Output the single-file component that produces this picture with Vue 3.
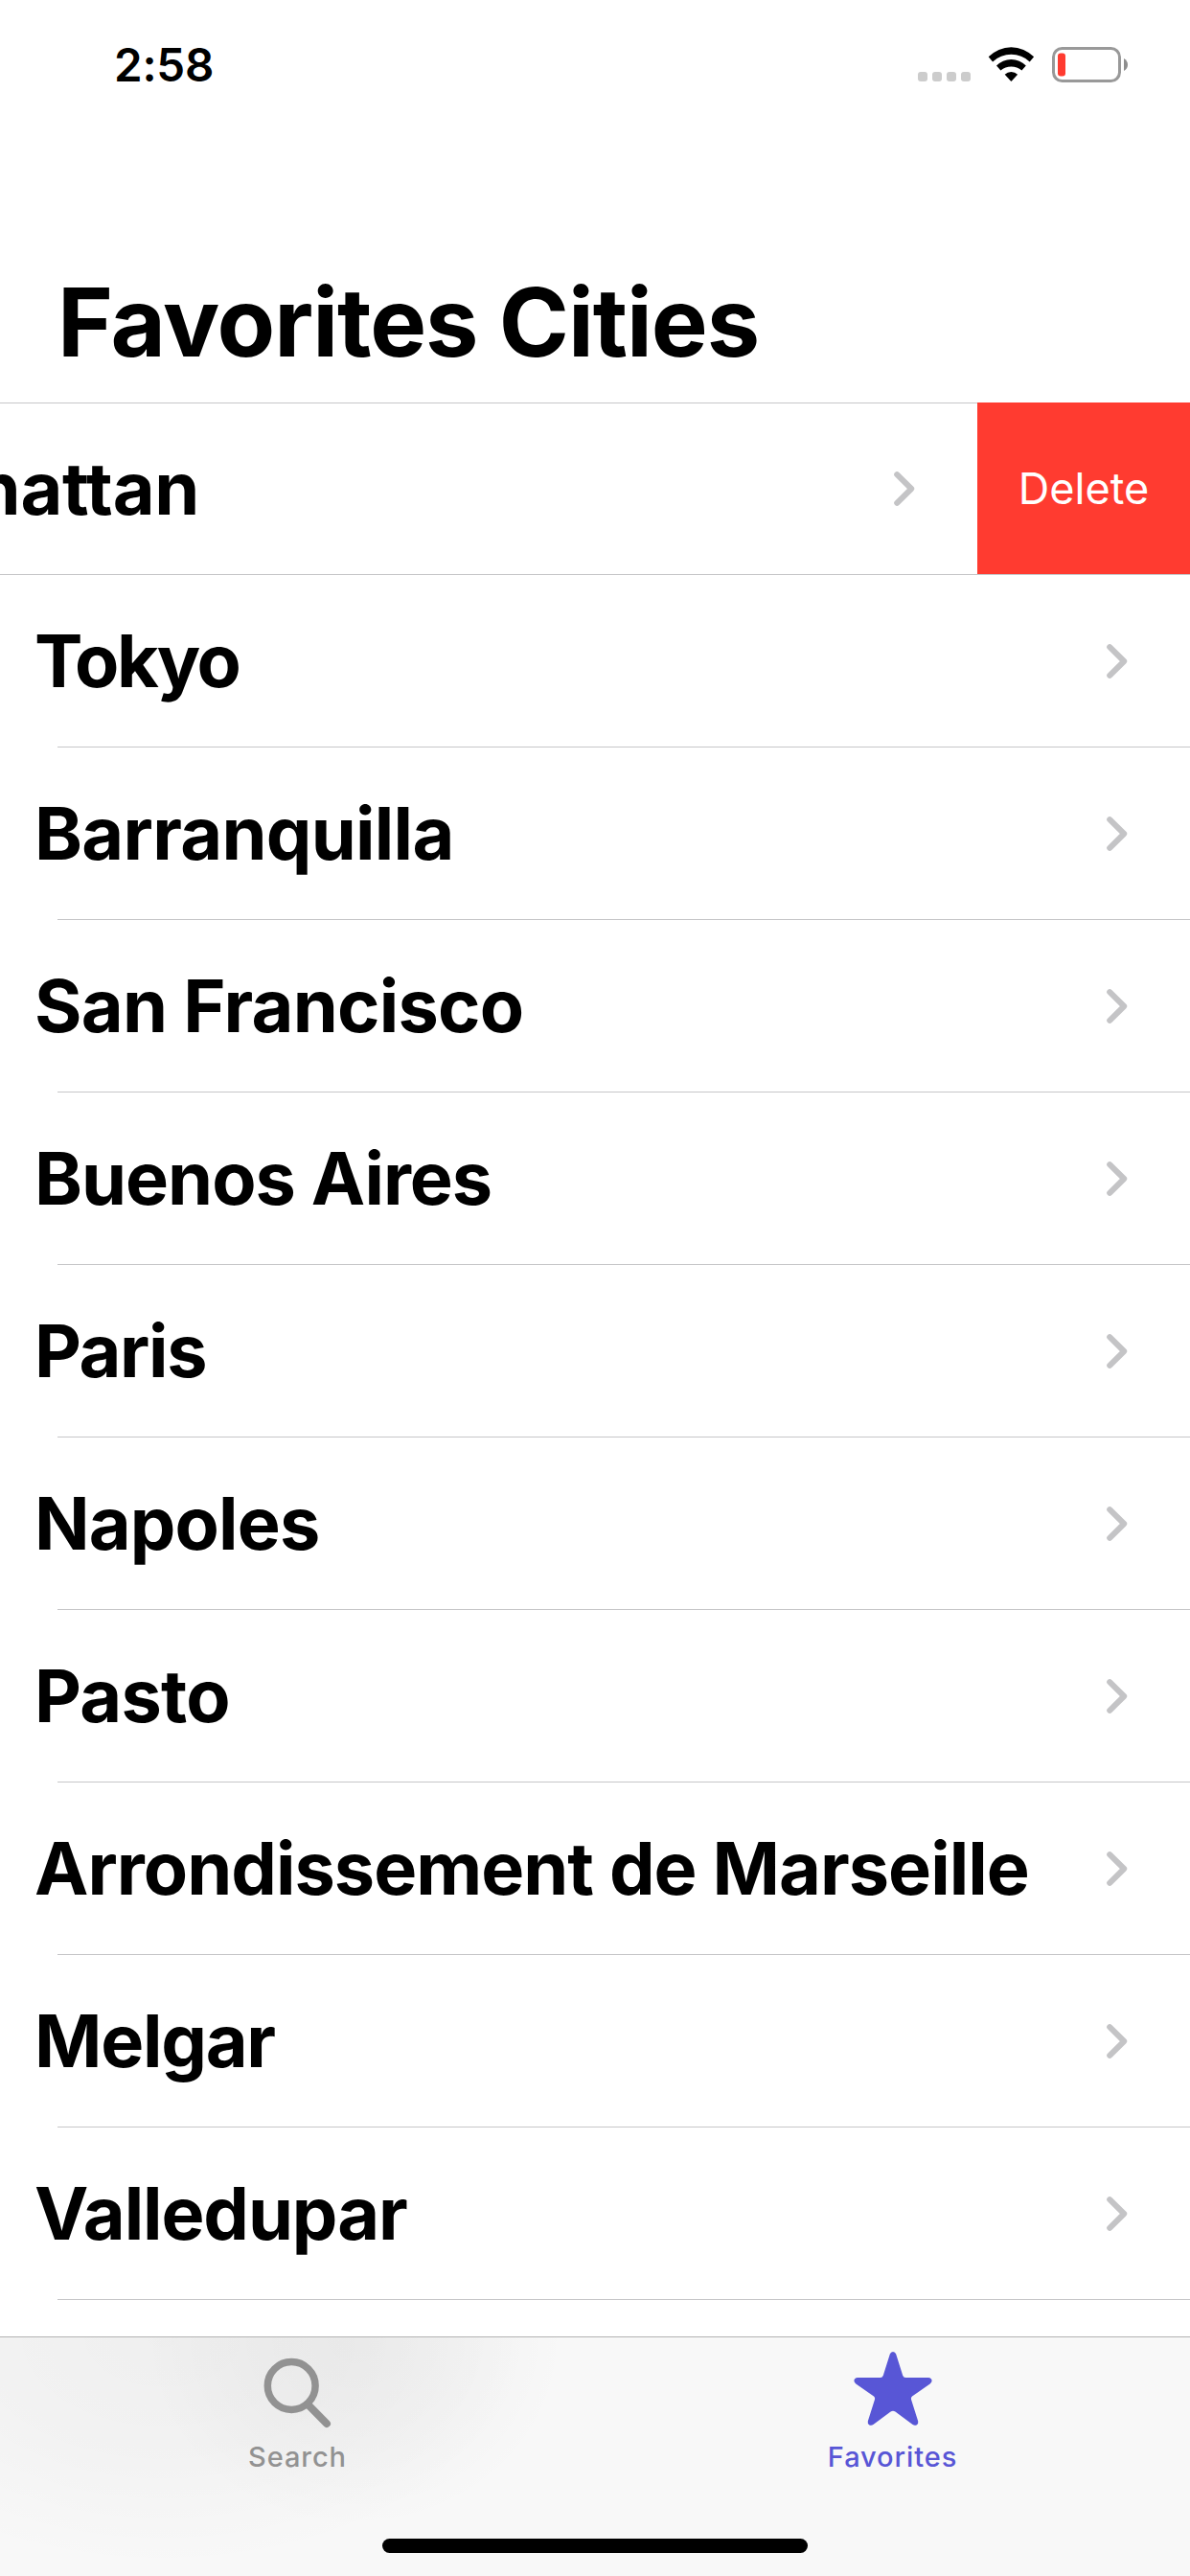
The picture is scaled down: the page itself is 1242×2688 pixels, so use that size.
<script setup>
const cities = [
  { name: 'Manhattan', tracking: -0.25, open: true },
  { name: 'Tokyo', tracking: -2.5 },
  { name: 'Barranquilla', tracking: -0.7 },
  { name: 'San Francisco', tracking: -0.75 },
  { name: 'Buenos Aires', tracking: -1.0 },
  { name: 'Paris', tracking: -1.4 },
  { name: 'Napoles', tracking: -0.85 },
  { name: 'Pasto', tracking: -0.75 },
  { name: 'Arrondissement de Marseille', tracking: -0.98 },
  { name: 'Melgar', tracking: -1.25 },
  { name: 'Valledupar', tracking: -1.1 },
]
</script>

<template>
  <div class="screen">
    <header class="status">
      <span class="time">2:58</span>
      <div class="indicators">
        <div class="dots"><i v-for="n in 4" :key="n"></i></div>
        <svg class="wifi" width="49" height="37" viewBox="0 0 49 37">
          <path d="M0.7 10.3A33 33 0 0 1 48.1 10.3L43.7 15.4A28.5 28.5 0 0 0 5.1 15.4Z" />
          <path d="M9 19.6A21 21 0 0 1 39.8 19.6L35.4 24.6A17 17 0 0 0 13.4 24.6Z" />
          <path d="M17.7 28.8A9.5 9.5 0 0 1 31.1 28.8L24.9 35.5Q24.4 36 23.9 35.5Z" />
        </svg>
        <svg class="battery" width="80" height="37" viewBox="0 0 80 37">
          <rect x="1.5" y="1.5" width="69" height="34" rx="9" fill="none" stroke="#999" stroke-width="3" />
          <rect x="6" y="6.5" width="8" height="24" rx="3" fill="#ff3b30" />
          <path d="M75 12Q79 14.5 79 18.5T75 25Z" fill="#8e8e8e" />
        </svg>
      </div>
    </header>

    <h1 class="title">Favorites Cities</h1>

    <ul class="list">
      <li v-for="city in cities" :key="city.name" class="row" :class="{ open: city.open }">
        <div class="cell">
          <span class="name" :style="{ letterSpacing: city.tracking + 'px' }">{{ city.name }}</span>
          <svg class="chevron" width="22" height="36" viewBox="0 0 22 36">
            <path d="M3.2 3.2L18.2 18L3.2 32.8" />
          </svg>
        </div>
        <button v-if="city.open" class="delete">Delete</button>
      </li>
    </ul>

    <nav class="tabs">
      <div class="tab">
        <svg class="icon" width="72" height="80" viewBox="0 0 72 80">
          <circle cx="29.2" cy="35.5" r="24.9" fill="none" stroke="#929292" stroke-width="7.5" />
          <path d="M46.8 55.5L66 75" fill="none" stroke="#929292" stroke-width="8" stroke-linecap="round" />
        </svg>
        <span class="label">Search</span>
      </div>
      <div class="tab active">
        <svg class="icon" width="82" height="80" viewBox="0 0 82 80">
          <path
            fill="#5856d6"
            d="M37.8 2.6Q38.6 0 41 0T44.2 2.6L51.2 24.8Q52 27 54.2 27H78Q81.2 27.3 81.6 30Q81.7 31.8 79.7 33.4L61 46.6Q59.4 47.8 60 49.8L67.2 72.4Q67.8 75.2 65.6 76.4Q63.6 77.4 61.6 76L43.4 62.6Q41 61 38.6 62.6L20.4 76Q18.4 77.4 16.4 76.4Q14.2 75.2 14.8 72.4L22 49.8Q22.6 47.8 21 46.6L2.3 33.4Q0.3 31.8 0.4 30Q0.8 27.3 4 27H27.8Q30 27 30.8 24.8Z"
          />
        </svg>
        <span class="label">Favorites</span>
      </div>
      <div class="home"></div>
    </nav>
  </div>
</template>

<style>
body {
  margin: 0;
  background: #fff;
}
</style>

<style scoped>
.screen {
  display: flex;
  flex-direction: column;
  width: 1242px;
  height: 2688px;
  overflow: hidden;
  background: #fff;
  color: #000;
  font-family: Inter, 'Liberation Sans', sans-serif;
}
.status {
  display: flex;
  flex: none;
  justify-content: space-between;
  height: 136px;
  padding: 0 64px 0 119px;
}
.time {
  font-size: 47.5px;
  font-weight: 600;
  line-height: 136px;
  letter-spacing: -0.2px;
}
.indicators {
  display: flex;
  align-items: flex-start;
  padding-top: 49px;
}
.dots {
  display: flex;
  gap: 5px;
  margin: 26px 18px 0 0;
}
.dots i {
  width: 10px;
  height: 10px;
  border-radius: 3px;
  background: #ccc;
}
.wifi {
  margin-right: 18px;
}
.title {
  flex: none;
  box-sizing: border-box;
  height: 284px;
  margin: 0;
  padding: 64px 0 0 60px;
  font-size: 99px;
  font-weight: 700;
  line-height: 272px;
  letter-spacing: -1.07px;
  white-space: nowrap;
}
.list {
  flex: none;
  height: 2018px;
  margin: 0;
  padding: 0;
  overflow: hidden;
  list-style: none;
}
.row {
  display: flex;
  height: 180px;
  background: linear-gradient(#c6c6c8, #c6c6c8) 60px 179px / 1182px 1px no-repeat;
}
.row.open {
  justify-content: flex-end;
  background:
    linear-gradient(#c6c6c8, #c6c6c8) 0 0 / 100% 1px no-repeat,
    linear-gradient(#c6c6c8, #c6c6c8) 0 179px / 100% 1px no-repeat;
}
.cell {
  display: flex;
  flex: none;
  align-items: center;
  justify-content: space-between;
  box-sizing: border-box;
  width: 1242px;
  height: 180px;
  padding: 0 65px 0 36px;
}
.name {
  font-size: 75.6px;
  font-weight: 700;
  line-height: 180px;
  white-space: nowrap;
}
.chevron path {
  fill: none;
  stroke: #c4c4c6;
  stroke-width: 6;
  stroke-linecap: round;
  stroke-linejoin: round;
}
.delete {
  flex: none;
  width: 222px;
  height: 179px;
  padding: 1px 0 0;
  border: 0;
  background: #ff3b30;
  color: #fff;
  font: 400 45px/178px Inter, 'Liberation Sans', sans-serif;
}
.tabs {
  position: relative;
  display: flex;
  flex: none;
  box-sizing: border-box;
  height: 250px;
  border-top: 1px solid #b2b2b2;
  background:
    radial-gradient(ellipse 220px 200px at 370px 0, rgba(0, 0, 0, 0.038), rgba(0, 0, 0, 0.022) 50%, transparent),
    radial-gradient(ellipse 380px 240px at 170px 0, rgba(0, 0, 0, 0.036), rgba(0, 0, 0, 0.022) 50%, transparent),
    #f8f8f8;
}
.tab {
  display: flex;
  flex: 1;
  flex-direction: column;
  align-items: center;
  padding-top: 15px;
  color: #929292;
}
.tab.active {
  color: #5856d6;
}
.label {
  margin-top: 12px;
  font-size: 29px;
  font-weight: 500;
  line-height: 35px;
  letter-spacing: 0.9px;
}
.home {
  position: absolute;
  left: 399px;
  bottom: 24px;
  width: 444px;
  height: 15px;
  border-radius: 8px;
  background: #000;
}
</style>
